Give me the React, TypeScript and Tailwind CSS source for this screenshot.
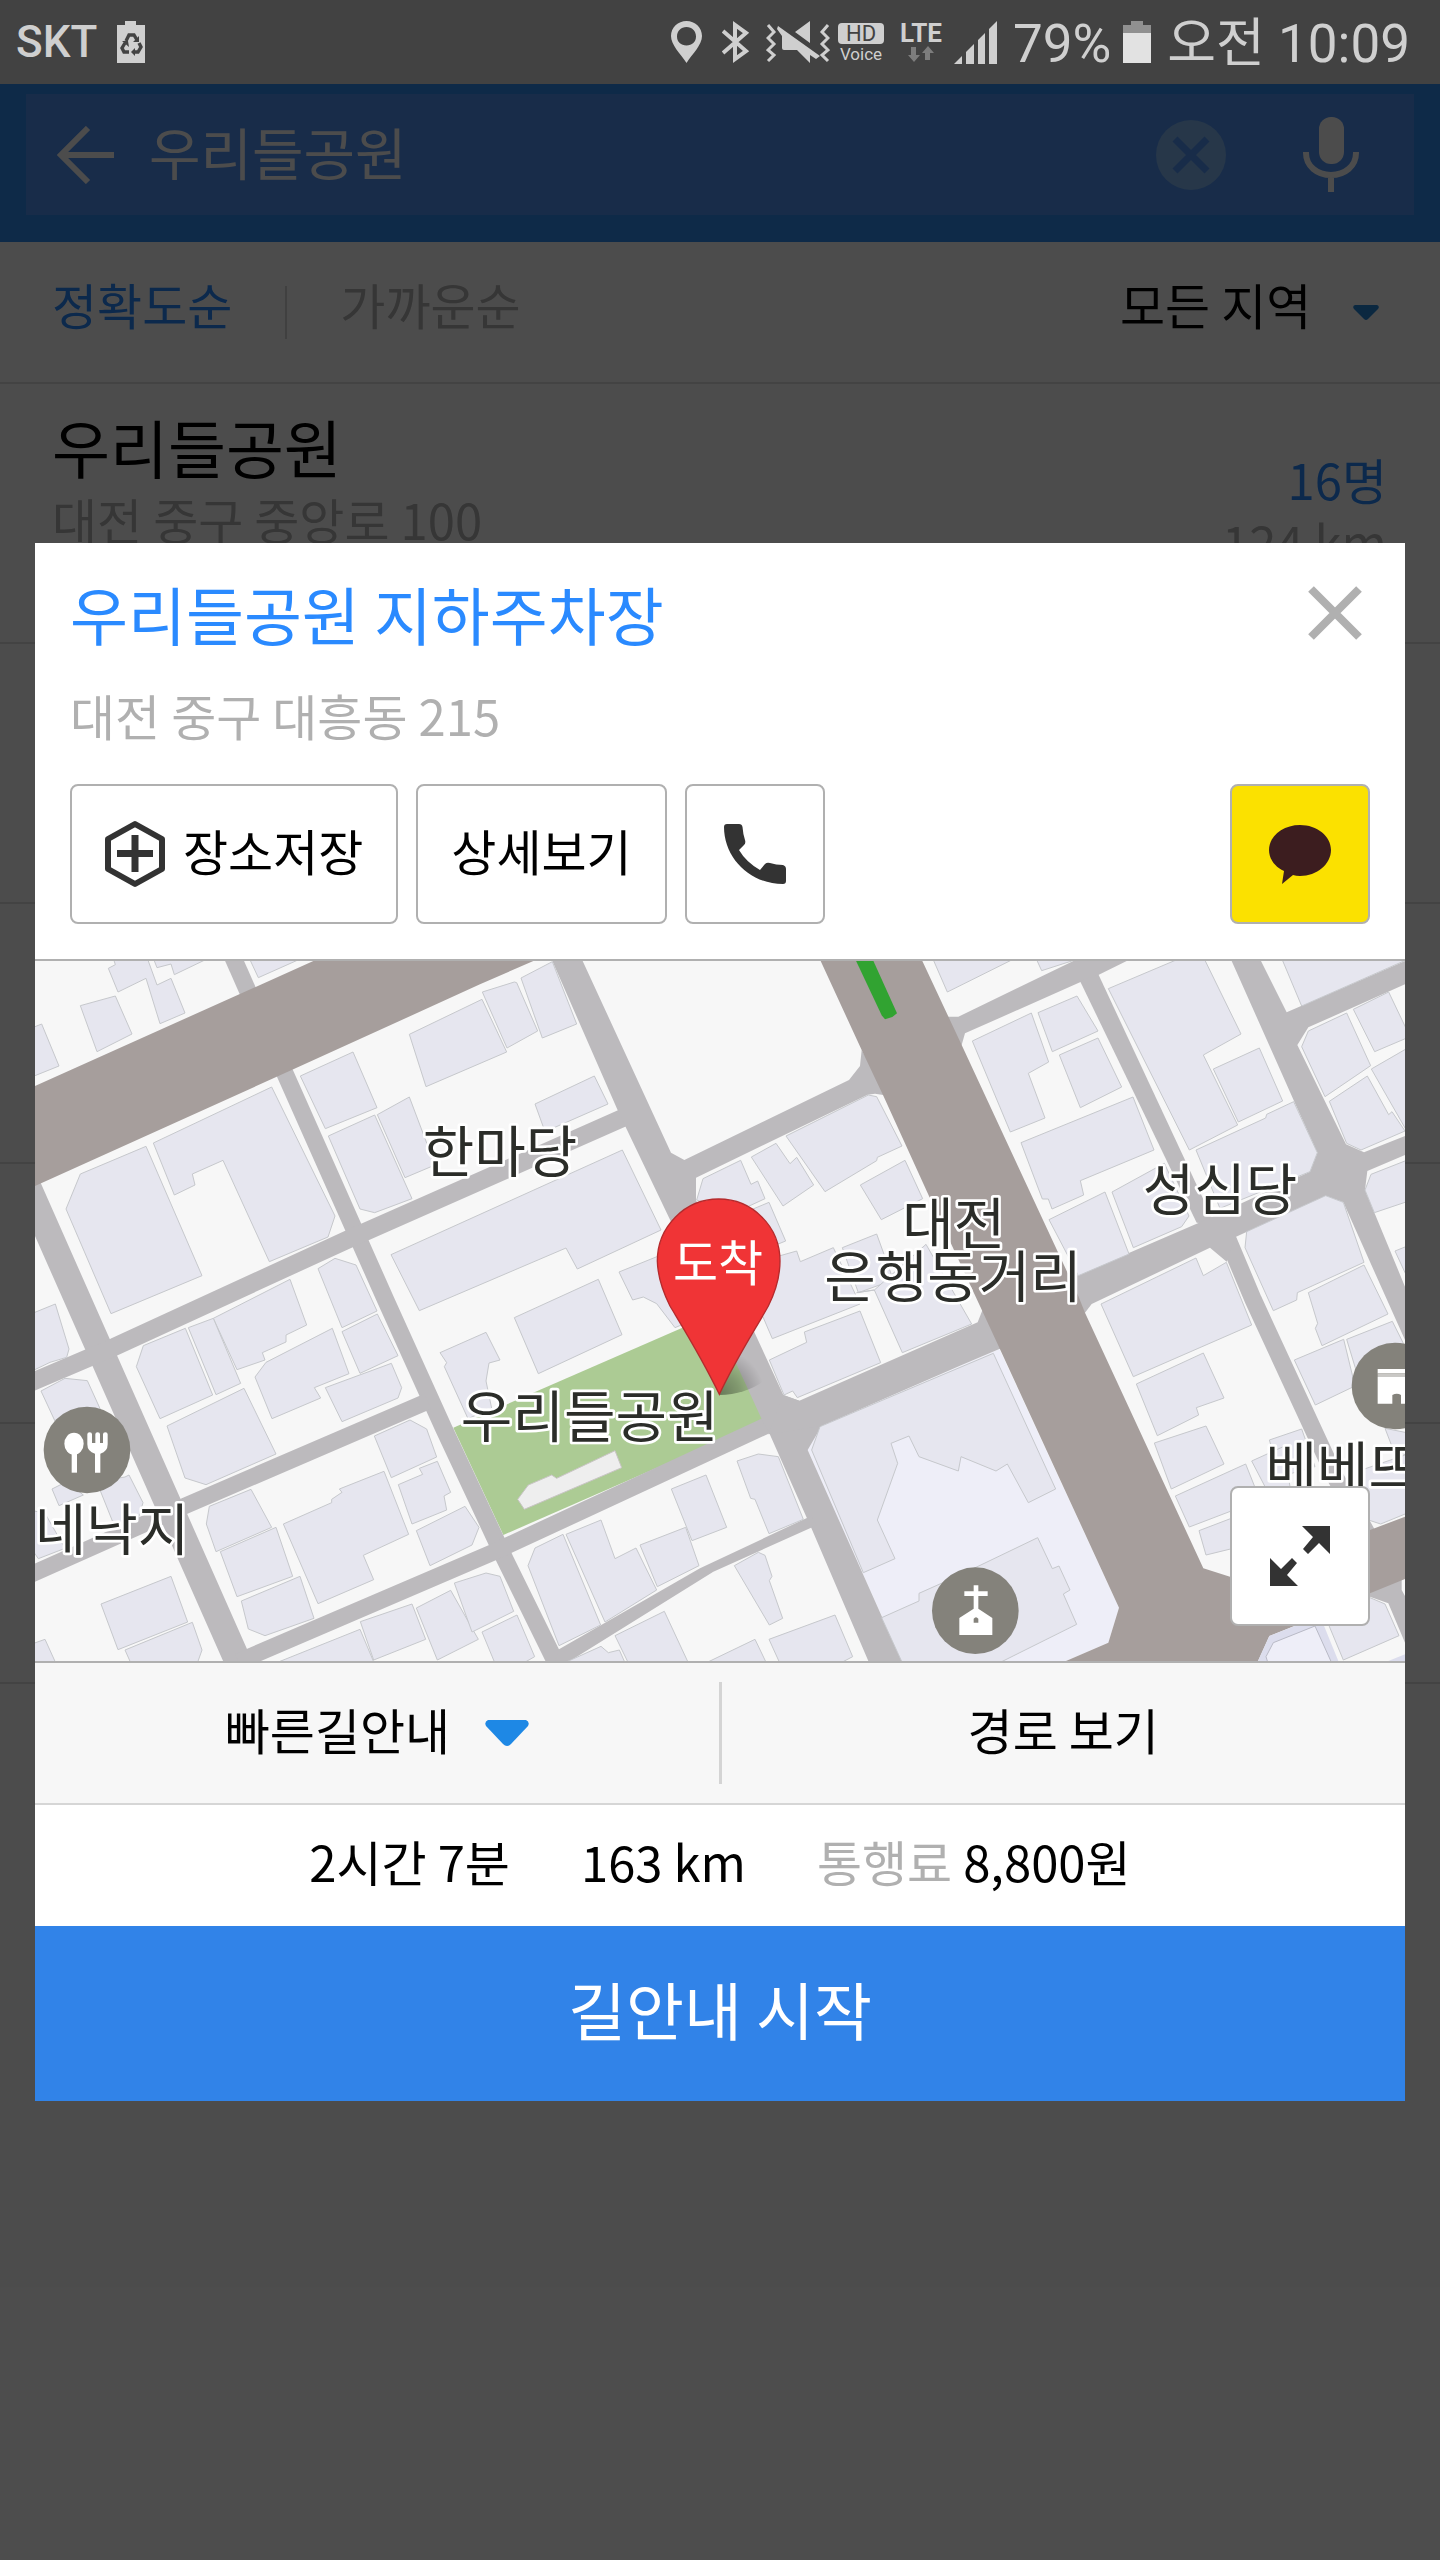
import React from "react";

type Tile = { x: number; y: number; blocks: string[] };

// three map units per pixel, every tile keeps its own local coordinates
const tiles: Tile[] = [
    {
        x: -15, y: -33,
        blocks: [
            "0,236 35,222 87,348 0,383",
            "151,167 256,138 306,252 201,305",
            "235,55 256,44 250,25 352,25 381,105 423,85 465,189 390,221 348,85 264,126",
            "370,25 381,53 423,42 433,74 535,25",
            "658,25 685,83 815,25",
            "370,579 725,411 915,798 894,861 718,935 579,631 487,672 495,705 433,735",
            "151,672 348,589 516,977 243,1091 108,777",
            "811,378 969,306 1041,473 886,536",
            "895,558 1034,495 1146,746 1034,788 990,777",
            "1042,494 1138,441 1215,645 1125,683",
            "1138,253 1356,148 1430,306 1188,410",
            "1083,914 1777,600 1893,840 1642,957 1608,894 1168,1082",
        ],
    },
    {
        x: 1335, y: -33,
        blocks: [
            "7,126 103,96 110,98 173,243 81,294",
            "123,84 217,35 290,222 187,264",
            "165,462 343,378 384,462 195,545",
            "650,750 669,686 782,631 813,703 833,693 855,746 760,790",
            "814,621 888,580 930,641 950,622 1001,705 909,768",
            "918,558 1165,435 1190,440 1266,588 1192,622 1190,632 1035,725",
            "1141,705 1275,631 1328,746 1204,809",
            "800,785 867,757 917,873 850,900",
            "417,966 580,900 640,1010 640,1110 585,1133 530,1061 490,1041 458,1050",
            "820,940 950,903 961,935 1060,893 1140,1062 877,1166 840,1080",
            "1087,893 1190,852 1240,990 1135,1028",
            "1130,1028 1183,1020 1338,883 1475,1122 1267,1208 1183,1020",
        ],
    },
    {
        x: 2685, y: -33,
        blocks: [
            "8,25 52,126 255,25",
            "318,25 335,62 450,25",
            "535,116 750,25 822,25 933,252 820,315 923,525 778,600",
            "1055,25 1115,168 1440,25",
            "127,273 304,189 356,336 295,370 345,504 241,546",
            "324,188 441,138 504,243 367,305",
            "388,315 504,264 575,411 451,473",
            "850,357 988,294 1058,453 925,516",
            "273,578 609,441 672,600 451,692 461,735 366,777 355,747 337,747",
            "798,600 1007,504 1010,493 1091,455 1162,608 1140,665 870,775",
            "357,809 525,726 597,912 445,977",
            "546,726 703,640 777,798 755,830 610,893",
            "1115,290 1135,243 1250,189 1322,347 1185,440",
            "1270,178 1376,126 1440,260 1334,305",
            "1324,357 1440,290 1440,560",
            "1198,454 1312,378 1376,494 1386,485 1425,543 1293,600 1250,580",
            "1305,720 1323,673 1440,627 1440,752 1333,788",
            "950,845 1187,737 1240,757 1302,937 1102,1028 1100,1050 1030,1082 945,893",
            "1395,903 1440,885 1440,1000",
            "513,1062 798,924 820,977 889,937 965,1125 610,1280",
            "1135,1028 1302,945 1374,1092 1176,1187 1156,1135 1163,1120",
        ],
    },
    {
        x: -15, y: 1017,
        blocks: [
            "550,55 780,-62 830,75 768,105 768,126 697,158 705,180 621,209",
            "864,-94 915,-125 978,-105 1041,33 936,83",
            "0,43 76,12 117,147 110,172 60,187 0,216",
            "33,273 105,235 172,242 212,330 85,385",
            "340,137 466,85 548,285 390,356 319,200",
            "475,83 550,55 632,250 558,284",
            "675,231 708,187 907,85 957,221 853,263 872,294 726,356",
            "936,95 1042,42 1104,167 990,220",
            "886,263 1084,190 1115,263 1104,294 936,365",
            "411,378 642,265 738,462 528,554 465,534",
            "1230,158 1368,97 1410,180 1377,189 1368,243 1385,325 1314,356 1243,200 1250,188",
            "1033,408 1140,360 1190,387 1220,471 1084,533",
            "1105,554 1178,523 1168,505 1222,484 1262,577 1242,588 1250,630 1146,672",
            "1159,692 1305,619 1347,682 1326,735 1200,797",
            "760,672 905,608 905,598 936,577 928,567 1062,514 1136,703 1000,766 1031,839 864,911",
            "538,619 663,568 725,682 558,755 529,672",
            "571,755 738,682 788,829 621,890",
            "634,903 810,829 852,955 705,1007 655,987",
            "213,912 423,829 473,966 264,1049",
            "285,1050 487,967 516,1050 500,1095 305,1095",
            "0,1034 45,1018 80,1095 0,1095",
            "66,567 110,545 160,585 87,617",
            "200,545 285,531 297,525 339,608 325,655 250,670",
            "0,630 45,640 105,745 25,776 0,740",
            "735,1090 990,988 1035,1095",
            "991,965 1146,912 1187,1018 1031,1080",
            "1159,924 1262,871 1345,1018 1222,1080",
            "1273,849 1368,819 1410,829 1451,934 1326,996",
            "1356,996 1461,945 1514,1070 1470,1095 1397,1095",
        ],
    },
    {
        x: 1335, y: 1017,
        blocks: [
            "103,53 355,-62 426,104 175,221",
            "868,180 980,127 973,96 1140,33 1202,188 952,293 938,273 912,285",
            "574,567 678,525 740,682 636,722",
            "771,483 835,462 895,470 970,658 867,701 825,598 812,595",
            "480,735 617,682 657,797 532,860",
            "258,703 363,660 405,776 468,744 530,870 375,966",
            "165,744 249,703 362,975 237,1037 144,797",
            "763,797 835,757 855,766 876,829 868,842 908,955 868,975",
            "405,1007 553,934 628,1095 448,1095",
            "867,1018 1065,945 1118,1070 1070,1095 902,1095",
            "665,1095 825,1018 862,1095",
            "250,1090 363,1039 385,1058 418,1050 438,1095",
            "995,450 1020,380 1540,160 1727,567 1645,608 1582,492 1548,513 1443,470 1435,513 1317,470 1287,408 1233,430 1253,490 1192,660 1245,776 1150,818",
            "1205,953 1317,903 1317,880 1440,825 1673,713 1717,806 1737,798 1770,870 1750,882 1790,973 1545,1095 1270,1095",
        ],
    },
    {
        x: 2685, y: 1017,
        blocks: [
            "619,252 820,159 882,294 799,323 806,345 682,407",
            "673,429 828,378 882,492 724,567",
            "736,588 947,492 990,600 778,681",
            "807,692 930,645 930,740 828,765",
            "1093,180 1241,118 1275,258 1156,315",
            "1250,118 1387,64 1420,130 1400,300 1290,250",
            "1018,420 1115,387 1155,500 1050,530",
            "965,483 1060,440 1080,560 1005,560",
            "1280,515 1440,460 1440,636 1352,672 1300,655",
            "1365,385 1440,400 1440,470 1390,450",
            "1190,960 1320,893 1365,912 1407,1007 1240,1080",
        ],
    },
];

const lanes = [
    { d: "M-24 672 L608 2100 L630 2150", w: 80 },
    { d: "M590 -20 L645 105", w: 52 },
    { d: "M740 315 L1052 1017 L1225 1400 L1410 1795 L1575 2130", w: 52 },
    { d: "M-20 1268 L239 1157 L942 834 L1775 466", w: 54 },
    { d: "M-20 1844 L449 1635 L1178 1321", w: 50 },
    { d: "M610 2102 L1374 1774 L2200 1391", w: 50 },
    { d: "M3570 815 L3655 1017 L3900 1547 L4020 1760", w: 52 },
];

const streets = [
    "1552,0 1750,452 1908,782 2180,1374 2203,1417 2328,1699 2500,2100 2600,2100 2318,1467 2360,1395 2293,1319 2245,1302 2155,1107 1983,717 1983,650 2498,401 2520,398 2560,404 2480,267 2475,315 2442,357 1948,597 1908,575 1643,0",
    "2245,1302 2293,1319 2775,1107 2828,1084 2845,1040 2920,1164 2893,1164 2775,1214 2360,1395 2200,1420",
    "1572,2065 1995,1822 2330,1664 2345,1693 2035,1832 1605,2100 1560,2100",
    "2720,167 2770,167 3115,0 3275,0 3190,42 3135,64 2790,217 2780,252 2760,260",
    "3135,60 3190,40 3540,790 3485,785",
    "3590,0 3778,422 3847,575 3825,632 3492,785 3110,950 3125,1060 3150,1055 3170,1029 3525,860 3575,902 3600,829 3872,704 3925,724 4110,1137 4110,977 3990,687 3997,630 4110,582 4110,525 3987,574 3933,550 3787,252 3820,199 4110,70 4110,0 3755,154 3678,0",
    "3990,1902 4060,1927 4110,2045 4110,1905 4100,1887 4100,1850",
];

const mapLabels = [
    { text: "한마당", x: 1395, y: 634 },
    { text: "우리들공원", x: 1664, y: 1429 },
    { text: "대전", x: 2756, y: 849 },
    { text: "은행동거리", x: 2754, y: 1009 },
    { text: "성심당", x: 3555, y: 748 },
    { text: "네낙지", x: 231, y: 1768 },
    { text: "베베뜨", x: 3923, y: 1582 },
];

const StreetMap = () => (
    <svg
        viewBox="0 0 4110 2100"
        preserveAspectRatio="xMidYMid slice"
        className="block w-full h-full bg-[#f7f7f7] font-['Noto_Sans_CJK_KR',sans-serif]"
        role="img"
        aria-label="우리들공원 지하주차장"
    >
        <defs>
            <radialGradient id="pinShadow" gradientUnits="userSpaceOnUse" cx="2053" cy="1300" r="150">
                <stop offset="0" stopColor="#000" stopOpacity="0.4" />
                <stop offset="0.4" stopColor="#000" stopOpacity="0.25" />
                <stop offset="0.9" stopColor="#000" stopOpacity="0" />
            </radialGradient>
        </defs>

        {/* park and church grounds */}
        <polygon points="1255,1400 2030,1062 2200,1374 1405,1722" fill="#accb94" />
        <polygon points="1448,1615 1480,1572 1550,1542 1565,1552 1740,1469 1760,1520 1468,1645" fill="#eee" stroke="#c9c5c5" strokeWidth="3" />
        <polygon points="2318,1467 2360,1395 2893,1164 3252,1940 3220,2045 3093,2100 2600,2100" fill="#eeeef8" />

        {/* roads */}
        <g fill="none" stroke="#bcbabd">
            {lanes.map((lane) => <path key={lane.d} d={lane.d} strokeWidth={lane.w} />)}
        </g>
        <g fill="#bcbabd">
            {streets.map((points) => <polygon key={points} points={points} />)}
        </g>
        <g fill="#a69e9c">
            <polygon points="0,375 835,0 1495,0 1335,70 775,325 0,675" />
            <polygon points="2357,0 2480,267 2545,404 2685,712 2893,1160 3252,1940 3220,2045 3093,2100 3669,2100 3703,2025 3840,1970 4005,1897 4110,1854 4110,1667 4005,1707 3585,1847 3505,1822 3150,1055 3130,1005 2780,252 2662,0" />
        </g>
        <polygon points="3669,2100 3703,2025 3855,1965 3910,2100" fill="#dcdded" />
        <polygon points="3700,2110 3693,2087 3715,2045 3840,1995 3892,2110" fill="#eeeef8" stroke="#b9bac6" strokeWidth="3" />
        <polygon points="4060,2100 4110,2080 4110,2100" fill="#dcdded" />

        {/* buildings */}
        {tiles.map((tile) => (
            <g key={`${tile.x}:${tile.y}`} transform={`translate(${tile.x} ${tile.y})`} fill="#e6e6ef" stroke="#c6c8cc" strokeWidth="3">
                {tile.blocks.map((points) => <polygon key={points} points={points} />)}
            </g>
        ))}

        {/* route */}
        <polygon points="2461,-5 2513,-5 2586,157 2572,168 2550,175 2540,163" fill="#31a331" />

        {/* places */}
        <g fill="#84827b">
            <circle cx="156" cy="1467" r="130" />
            <circle cx="2821" cy="1949" r="130" />
            <circle cx="4080" cy="1275" r="130" />
        </g>
        <g fill="#fff">
            <ellipse cx="117" cy="1448" rx="29" ry="33" />
            <path d="M110 1470h16v65h-16z" />
            <path d="M157 1420q0-6 7-6t7 6v26h10v-26q0-6 7-6t7 6v26h9v-26q0-6 7-6t7 6v30q0 22-22 28v57h-16v-57q-23-6-23-28z" />
            <path d="M2816 1873h14v18h28v14h-28v38l42 28v51h-99v-51l43-28v-38h-28v-14h28z" />
            <path d="M4028 1224h104v13h-104zM4028 1248h104v80h-34v-26q-12-8-26 0v26h-44z" />
        </g>
        <path d="M2816 1985v-12q7-9 14 0v12z" fill="#84827b" />
        <path d="M4028 1237h104v11h-104z" fill="#c9c8c5" />

        <g fontSize="168" textAnchor="middle" fill="#2b2d29" stroke="#fff" strokeWidth="16" strokeLinejoin="round" className="[paint-order:stroke]">
            {mapLabels.map((label) => <text key={label.text} x={label.x} y={label.y}>{label.text}</text>)}
        </g>

        {/* destination pin */}
        <path d="M2053 1300L2053 1150H2200V1250Q2140 1300 2053 1302z" fill="url(#pinShadow)" />
        <path
            d="M2053 1300C2000 1190 1950 1110 1905 1035C1880 985 1868 940 1867 900A184 186 0 0 1 2235 900C2235 940 2225 985 2200 1035C2158 1110 2105 1190 2053 1300z"
            fill="#f03436"
            stroke="#b52a2c"
            strokeWidth="4"
        />
        <text x="2049" y="960" fontSize="147" textAnchor="middle" fill="#fff">도착</text>
    </svg>
);

const StatusBar = () => (
    <div className="h-[84px] shrink-0 bg-[#424242] text-[#cfcfcf] font-[Roboto,'Noto_Sans_CJK_KR',sans-serif] flex items-center justify-between pl-4 pr-[30px]">
        <div className="flex items-center gap-5">
            <span className="text-[44px] leading-none font-medium">SKT</span>
            <svg width="28" height="42" viewBox="0 0 28 42" fill="currentColor">
                <path d="M8 0h11v4h9v38H0V4h8z" />
                <g fill="none" stroke="#424242" strokeWidth="3.4">
                    <path d="M9 20l3-6h5l3 5M22 22l2 4-3 5h-5M12 31H7l-2-4 3-5" />
                </g>
                <path d="M22 15v6h-6zM18 27v8l-4-4zM5 20h6l1 6z" fill="#424242" />
            </svg>
        </div>

        <div className="flex items-center">
            <svg width="31" height="42" viewBox="0 0 31 42" fill="currentColor" fillRule="evenodd">
                <path d="M15.500 0C24 0 31 6.500 31 15C31 24 22 32 15.500 42C9 32 0 24 0 15C0 6.500 7 0 15.500 0zM15.500 6C10 6 6 10 6 15.500S10 24.500 15.500 24.500S25 21 25 15.500S21 6 15.500 6z" />
            </svg>
            <svg width="28" height="42" viewBox="0 0 28 42" className="ml-5" fill="none" stroke="currentColor" strokeWidth="4">
                <path d="M1 10L24 30L13 38V4L24 12L1 32" />
            </svg>
            <svg width="64" height="42" viewBox="0 0 64 42" className="ml-4">
                <path d="M2 4l6 7-6 6 6 6-6 6 6 5-6 6M62 4l-6 7 6 6-6 6 6 6-6 5 6 6" fill="none" stroke="currentColor" strokeWidth="3" />
                <path d="M12 5L54 35L50 38L44 34V42L31 29H18Q16 29 16 27V15L11 8zM29 11L44 0V22z" fill="currentColor" />
            </svg>
            <div className="ml-2 flex flex-col items-center pt-0.5">
                <span className="w-[46px] h-[21px] rounded-sm bg-[#cfcfcf] text-[#424242] text-[22px] leading-[22px] text-center">HD</span>
                <span className="text-[17px] leading-5">Voice</span>
            </div>
            <div className="ml-4 flex flex-col items-center">
                <span className="text-[26px] leading-[24px] font-bold">LTE</span>
                <svg width="26" height="18" viewBox="0 0 26 18" fill="#7d7d7d">
                    <path d="M3 2h5v8h4l-6 7-6-7h3zM17 15h5V8h4l-6-7-6 7h3z" />
                </svg>
            </div>
            <svg width="43" height="43" viewBox="0 0 43 43" className="ml-3" fill="currentColor">
                <path d="M0 43L8 35V43zM12 31L20 23V43H12zM24 19L31 12V43H24zM35 8L43 0V43H35z" />
            </svg>
            <span className="ml-4 pt-1 text-[53px] leading-none">79%</span>
            <svg width="28" height="42" viewBox="0 0 28 42" className="ml-3">
                <path d="M8 0h12v4h8v8H0V4h8z" fill="#909090" />
                <path d="M0 12h28v30H0z" fill="#e2e2e2" />
            </svg>
            <span className="ml-4 pt-1 text-[53px] leading-none">오전 10:09</span>
        </div>
    </div>
);

const SearchResults = () => (
    <div>
        <div className="bg-[#318cf0] pt-[10px] px-[26px] pb-[27px]">
            <div className="h-[121px] bg-[#5093f3] flex items-center pl-[31px] pr-[55px] text-white">
                <button aria-label="뒤로">
                    <svg width="58" height="58" viewBox="0 0 58 58" fill="none" stroke="currentColor" strokeWidth="6">
                        <path d="M57 29H4M31 2L4 29L31 56" />
                    </svg>
                </button>
                <input
                    aria-label="검색"
                    defaultValue="우리들공원"
                    className="flex-1 min-w-0 ml-[34px] pb-2 bg-transparent text-[56px] leading-[80px] outline-none"
                />
                <button aria-label="지우기" className="size-[70px] rounded-full bg-[#82b8f4] text-[#5093f3] flex items-center justify-center">
                    <svg width="38" height="38" viewBox="0 0 38 38" fill="none" stroke="currentColor" strokeWidth="7">
                        <path d="M3 3L35 35M35 3L3 35" />
                    </svg>
                </button>
                <button aria-label="음성 검색" className="ml-[77px]">
                    <svg width="56" height="75" viewBox="0 0 56 75">
                        <rect x="16" y="0" width="25" height="47" rx="12" fill="currentColor" />
                        <path d="M3 35V36C3 49 14 58 28 58S53 49 53 36V35M28 58V75" fill="none" stroke="currentColor" strokeWidth="6" />
                    </svg>
                </button>
            </div>
        </div>

        <div className="h-[142px] border-b-2 border-[#e0e0e0] flex items-center justify-between pl-13 pr-[61px] text-[49px] leading-[70px]">
            <div className="flex items-center gap-[53px]">
                <button className="pb-4 text-[#2a8aff]">정확도순</button>
                <span className="w-0.5 h-[53px] bg-[#d8d8d8]" />
                <button className="pb-4 text-[#b4b4b4]">가까운순</button>
            </div>
            <div className="flex items-center gap-[41px]">
                <select aria-label="지역" className="appearance-none pb-4 outline-none">
                    <option>모든 지역</option>
                </select>
                <svg width="26" height="15" viewBox="0 0 26 15" fill="#2588d8">
                    <path d="M2 0H24Q27 1 25 4L15 14Q13 16 11 14L1 4Q-1 1 2 0z" />
                </svg>
            </div>
        </div>

        <ul>
            <li className="h-[260px] border-b-2 border-[#e0e0e0] flex justify-between pl-13 pr-[53px]">
                <div className="pt-5">
                    <h2 className="text-[63px] leading-[84px]">우리들공원</h2>
                    <p className="text-[49px] leading-[62px] text-[#b4b4b4]">대전 중구 중앙로 100</p>
                </div>
                <div className="pt-16 text-right text-[49px] leading-[62px]">
                    <p className="text-[#2a8aff]">16명</p>
                    <p className="text-[#b4b4b4]">124 km</p>
                </div>
            </li>
            {[2, 3, 4, 5].map((row) => (
                <li key={row} className="h-[260px] border-b-2 border-[#e0e0e0]" />
            ))}
        </ul>
    </div>
);

const outlineButton = "h-[140px] border-2 border-[#b0b0b0] rounded-lg flex items-center justify-center";

const PlaceDialog = () => (
    <div role="dialog" aria-label="우리들공원 지하주차장" className="w-full bg-white text-[49px] leading-[70px]">
        <div className="px-[35px] pt-[25px] pb-[35px] border-b-2 border-[#b0b0b0]">
            <div className="flex items-center justify-between">
                <h1 className="text-[63px] leading-[90px] text-[#2a8aff]">우리들공원 지하주차장</h1>
                <button aria-label="닫기" className="size-[70px] flex items-center justify-center">
                    <svg width="54" height="54" viewBox="0 0 54 54" fill="none" stroke="#b0b0b0" strokeWidth="8">
                        <path d="M3 3L51 51M51 3L3 51" />
                    </svg>
                </button>
            </div>
            <p className="mt-[22px] text-[#b0b0b0]">대전 중구 대흥동 215</p>
            <div className="mt-[34px] flex gap-[18px]">
                <button className={`${outlineButton} px-[33px] gap-[18px]`}>
                    <svg width="60" height="68" viewBox="0 0 60 68" fill="none" stroke="#333" strokeWidth="6">
                        <path d="M30 4L57 19V49L30 64L3 49V19z" strokeLinejoin="round" />
                        <path d="M30 15V52M12 33.500H48" strokeWidth="7" />
                    </svg>
                    <span className="pb-2">장소저장</span>
                </button>
                <button className={`${outlineButton} px-[33px]`}>
                    <span className="pb-2">상세보기</span>
                </button>
                <button aria-label="전화" className={`${outlineButton} w-[140px]`}>
                    <svg width="62" height="60" viewBox="0 0 62 60" fill="#333">
                        <path d="M3 0H15Q18 0 18.500 3Q19 10 21 16Q22 19 20 21L15 26Q22 38 36 46L41 40Q43 38 46 39Q52 41 59 41Q62 42 62 45V57Q62 60 59 60C26 60 0 34 0 3Q0 0 3 0z" />
                    </svg>
                </button>
                <button aria-label="카카오톡 공유" className={`${outlineButton} w-[140px] ml-auto bg-[#fbe100]`}>
                    <svg width="62" height="59" viewBox="0 0 62 59" fill="#3c1d1f">
                        <path d="M31 0C48 0 62 11 62 25S48 51 31 51Q27 51 24 50L13 59L15 46C6 42 0 34 0 25C0 11 14 0 31 0z" />
                    </svg>
                </button>
            </div>
        </div>

        <div className="relative h-[700px] overflow-hidden">
            <StreetMap />
            <button aria-label="지도 확대" className={`${outlineButton} w-[140px] bg-white absolute right-[35px] bottom-[35px]`}>
                <svg width="60" height="60" viewBox="0 0 60 60" fill="#333">
                    <path d="M32 0H60V28L49 17L38 28L33 23L43 11zM0 60V32L11 43L22 32L27 37L17 49L28 60z" />
                </svg>
            </button>
        </div>

        <div className="h-[144px] border-y-2 border-t-[#b0b0b0] border-b-[#d6d6d6] bg-[#f7f7f7] flex items-center">
            <div className="flex-1 flex items-center justify-center gap-[34px]">
                <select aria-label="경로 종류" className="appearance-none pb-2 outline-none">
                    <option>빠른길안내</option>
                </select>
                <svg width="44" height="26" viewBox="0 0 44 26" fill="#1e88e5">
                    <path d="M3 0H41Q45 2 43 6L26 24Q22 28 18 24L1 6Q-1 2 3 0z" />
                </svg>
            </div>
            <span className="w-[3px] h-[102px] bg-[#d4d4d4]" />
            <button className="flex-1 pb-2">경로 보기</button>
        </div>

        <div className="h-[121px] pb-[10px] flex items-center justify-center gap-[71px]">
            <span>2시간 7분</span>
            <span>163 km</span>
            <span><span className="text-[#b0b0b0]">통행료</span> 8,800원</span>
        </div>

        <button className="block w-full h-[175px] pb-3 bg-[#3183e8] text-white text-[63px]">길안내 시작</button>
    </div>
);

const App = () => {
    return (
        <div className="min-h-screen flex flex-col bg-white text-black font-['Noto_Sans_CJK_KR',sans-serif]">
            <StatusBar />
            <main className="relative flex-1">
                <SearchResults />
                <div className="absolute inset-0 bg-black/70 flex items-center justify-center px-[35px]">
                    <PlaceDialog />
                </div>
            </main>
        </div>
    );
};

export default App;
